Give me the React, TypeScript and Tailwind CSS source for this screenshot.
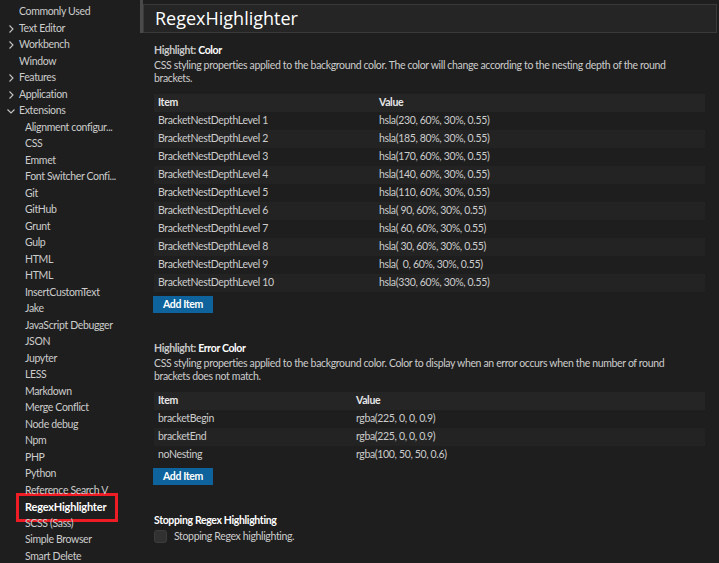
import React from 'react';

const font = { fontFamily: 'Lato, "Open Sans", sans-serif' };
const titleFont = { fontFamily: '"Open Sans", "Noto Sans", sans-serif' };

type NavItem = { label: string; level: 0 | 1; chevron?: 'right' | 'down'; selected?: boolean };

const navItems: NavItem[] = [
    { label: 'Commonly Used', level: 0 },
    { label: 'Text Editor', level: 0, chevron: 'right' },
    { label: 'Workbench', level: 0, chevron: 'right' },
    { label: 'Window', level: 0 },
    { label: 'Features', level: 0, chevron: 'right' },
    { label: 'Application', level: 0, chevron: 'right' },
    { label: 'Extensions', level: 0, chevron: 'down' },
    { label: 'Alignment configur...', level: 1 },
    { label: 'CSS', level: 1 },
    { label: 'Emmet', level: 1 },
    { label: 'Font Switcher Confi...', level: 1 },
    { label: 'Git', level: 1 },
    { label: 'GitHub', level: 1 },
    { label: 'Grunt', level: 1 },
    { label: 'Gulp', level: 1 },
    { label: 'HTML', level: 1 },
    { label: 'HTML', level: 1 },
    { label: 'InsertCustomText', level: 1 },
    { label: 'Jake', level: 1 },
    { label: 'JavaScript Debugger', level: 1 },
    { label: 'JSON', level: 1 },
    { label: 'Jupyter', level: 1 },
    { label: 'LESS', level: 1 },
    { label: 'Markdown', level: 1 },
    { label: 'Merge Conflict', level: 1 },
    { label: 'Node debug', level: 1 },
    { label: 'Npm', level: 1 },
    { label: 'PHP', level: 1 },
    { label: 'Python', level: 1 },
    { label: 'Reference Search V', level: 1 },
    { label: 'RegexHighlighter', level: 1, selected: true },
    { label: 'SCSS (Sass)', level: 1 },
    { label: 'Simple Browser', level: 1 },
    { label: 'Smart Delete', level: 1 },
];

const colorRows: [string, string][] = [
    ['BracketNestDepthLevel 1', 'hsla(230, 60%, 30%, 0.55)'],
    ['BracketNestDepthLevel 2', 'hsla(185, 80%, 30%, 0.55)'],
    ['BracketNestDepthLevel 3', 'hsla(170, 60%, 30%, 0.55)'],
    ['BracketNestDepthLevel 4', 'hsla(140, 60%, 30%, 0.55)'],
    ['BracketNestDepthLevel 5', 'hsla(110, 60%, 30%, 0.55)'],
    ['BracketNestDepthLevel 6', 'hsla( 90, 60%, 30%, 0.55)'],
    ['BracketNestDepthLevel 7', 'hsla( 60, 60%, 30%, 0.55)'],
    ['BracketNestDepthLevel 8', 'hsla( 30, 60%, 30%, 0.55)'],
    ['BracketNestDepthLevel 9', 'hsla(  0, 60%, 30%, 0.55)'],
    ['BracketNestDepthLevel 10', 'hsla(330, 60%, 30%, 0.55)'],
];

const errorRows: [string, string][] = [
    ['bracketBegin', 'rgba(225, 0, 0, 0.9)'],
    ['bracketEnd', 'rgba(225, 0, 0, 0.9)'],
    ['noNesting', 'rgba(100, 50, 50, 0.6)'],
];

const Chevron: React.FC<{ dir: 'right' | 'down' }> = ({ dir }) => (
    <svg width="10" height="10" viewBox="0 0 10 10" className="shrink-0">
        {dir === 'right' ? (
            <path d="M3.5 1.5 L7 5 L3.5 8.5" fill="none" stroke="#c5c5c5" strokeWidth="1.1" />
        ) : (
            <path d="M1.5 3.5 L5 7 L8.5 3.5" fill="none" stroke="#c5c5c5" strokeWidth="1.1" />
        )}
    </svg>
);

const Sidebar: React.FC = () => (
    <div className="relative w-[143px] shrink-0 pt-[4px] text-[10.5px] tracking-[-0.35px] text-[#cccccc]">
        {/* scrollbar thumb */}
        <div className="absolute right-0 top-0 h-[33px] w-[3px] bg-[#4a4a4a]" />
        {navItems.map((item, i) =>
            item.selected ? (
                <div key={i} className="ml-[16px] mr-[25px] my-[-6px] flex h-[28.5px] items-center border-[3px] border-[#ee1c24] pl-[6px] text-[11px] tracking-[-0.2px] font-bold text-white">
                    {item.label}
                </div>
            ) : (
                <div
                    key={i}
                    className={`flex h-[16.5px] items-center overflow-hidden whitespace-nowrap ${item.level === 1 ? 'pl-[25px]' : item.chevron ? 'pl-[6px]' : 'pl-[19px]'}`}
                >
                    {item.chevron && (
                        <span className="mr-[3px] flex">
                            <Chevron dir={item.chevron} />
                        </span>
                    )}
                    {item.label}
                </div>
            )
        )}
    </div>
);

const SettingTable: React.FC<{ rows: [string, string][]; itemWidth: string }> = ({ rows, itemWidth }) => (
    <div className="text-[#cccccc]">
        <div className="flex h-[18px] items-center bg-[#252526] font-bold text-[#e7e7e7]">
            <div className={`${itemWidth} pl-[4px]`}>Item</div>
            <div className="pl-[4px]">Value</div>
        </div>
        {rows.map(([k, v], i) => (
            <div key={i} className={`flex h-[18px] items-center ${i % 2 === 1 ? 'bg-[#232323]' : 'bg-[#1e1e1e]'}`}>
                <div className={`${itemWidth} pl-[4px]`}>{k}</div>
                <div className="whitespace-pre pl-[4px]">{v}</div>
            </div>
        ))}
    </div>
);

const AddButton: React.FC = () => (
    <button className="mt-[4px] ml-[-1px] flex h-[17px] w-[60px] items-center justify-center bg-[#0e639c] font-bold text-white">
        Add Item
    </button>
);

const SectionTitle: React.FC<{ category: string; name: string }> = ({ category, name }) => (
    <div className="h-[14px] leading-[14px] font-bold">
        <span className="text-[#c8c8c8]">{category}</span> <span className="text-white">{name}</span>
    </div>
);

export default function App() {
    return (
        <div className="flex h-[563px] w-[719px] overflow-hidden bg-[#1e1e1e]" style={font}>
            <Sidebar />
            <div className="flex-1 pr-[2px]">
                <div className="mt-[4px] flex h-[29px] items-center border border-[#3a3a3a] bg-[#252526] pl-[11px] text-[18px] text-white" style={titleFont}>
                    RegexHighlighter
                </div>
                <div className="pl-[11px] pr-[12px] text-[10.5px] tracking-[-0.35px]">
                    <div className="pt-[10px]">
                        <SectionTitle category="Highlight:" name="Color" />
                        <p className="mt-[2px] pr-[20px] leading-[13px] text-[#cccccc]">
                            CSS styling properties applied to the background color. The color will change according to the nesting depth of the round brackets.
                        </p>
                        <div className="mt-[9px]">
                            <SettingTable rows={colorRows} itemWidth="w-[221px]" />
                        </div>
                        <AddButton />
                    </div>
                    <div className="pt-[28px]">
                        <SectionTitle category="Highlight:" name="Error Color" />
                        <p className="mt-[2px] pr-[20px] leading-[13px] text-[#cccccc]">
                            CSS styling properties applied to the background color. Color to display when an error occurs when the number of round brackets does not match.
                        </p>
                        <div className="mt-[9px]">
                            <SettingTable rows={errorRows} itemWidth="w-[198px]" />
                        </div>
                        <AddButton />
                    </div>
                    <div className="pt-[28px]">
                        <div className="h-[14px] leading-[14px] font-bold text-white">Stopping Regex Highlighting</div>
                        <div className="mt-[2px] flex items-center">
                            <div className="h-[13px] w-[13px] rounded-[3px] border border-[#3c3c3c] bg-[#313131]" />
                            <span className="ml-[7px] text-[#cccccc]">Stopping Regex highlighting.</span>
                        </div>
                    </div>
                </div>
            </div>
        </div>
    );
}
